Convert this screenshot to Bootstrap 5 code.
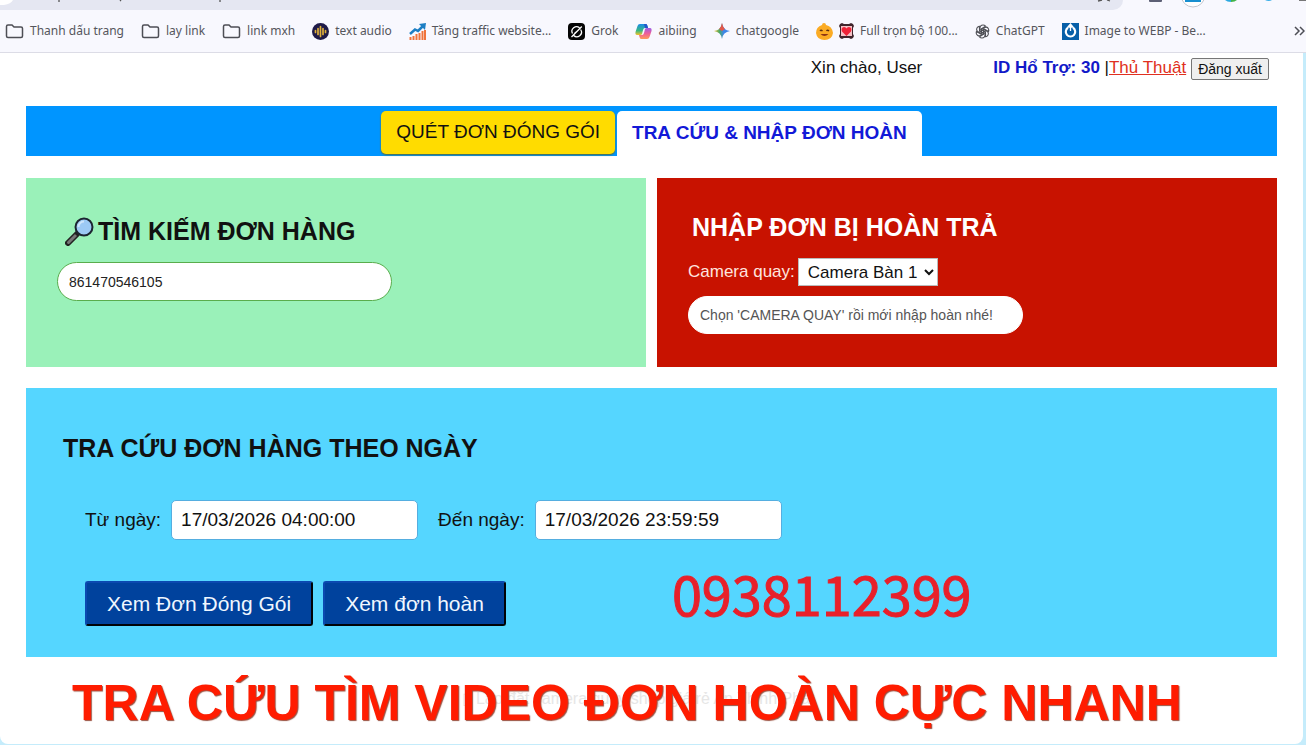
<!DOCTYPE html>
<html lang="vi">
<head>
<meta charset="utf-8">
<meta name="viewport" content="width=device-width, initial-scale=1">
<title>Tra cứu &amp; nhập đơn hoàn</title>
<link href="https://cdn.jsdelivr.net/npm/bootstrap@5.3.0/dist/css/bootstrap.min.css" rel="stylesheet">
<style>
  body { background: #c5ecfb; color: #111; font-family: "Liberation Sans", Arial, sans-serif; font-size: 16px; line-height: 24px; }

  /* browser chrome */
  .chrome { background: #f8f8fe; border-bottom: 1px solid #dcdce6; height: 53px; overflow: hidden; font-family: "Noto Sans", "Open Sans", sans-serif; font-size: 12px; }
  .chrome-top { height: 10px; }
  .omnibox { background: #e5e7f2; border-radius: 0 0 14px 0; width: 86%; height: 10px; overflow: hidden; }
  .chrome-top svg { display: block; flex: none; }
  .bookmarks { height: 42px; gap: 17px; padding: 0 1px 0 5px; white-space: nowrap; }
  .bookmarks a { color: #55565c; text-decoration: none; gap: 6px; display: flex; align-items: center; }
  .bookmarks svg { flex: none; }
  .more { margin-left: auto; color: #55565c; background: none; border: 0; padding: 0; line-height: 0; }

  /* application frame */
  .sheet { background: #fff; border-radius: 0 0 8px 8px; margin-right: 3px; padding: 0 26px 33px; position: relative; }
  .account { height: 53px; padding: 3px 8px 0 0; font-size: 17px; }
  .hello { margin-right: 71px; }
  .support { color: #1219c8; font-weight: 700; }
  .tips { color: #e03020; }
  .btn-logout { font-size: 14px; line-height: 20px; padding: 0 6px; background: #efefef; border: 1px solid #767676; border-radius: 2px; margin-left: 5px; color: #111; margin-top: 2px; }

  .tabs { background: #0095ff; height: 50px; gap: 2px; padding-top: 5px; }
  .tab-btn { border: 0; font-size: 19px; line-height: 24px; padding: 9px 15px 10px; color: #111; white-space: nowrap; }
  .tab-pack { background: #ffdc00; border-radius: 5px; box-shadow: 0 1px 2px #5c6b2f; height: 43px; }
  .tab-return { background: #fff; border-radius: 5px 5px 0 0; color: #1219d8; font-weight: 700; height: 45px; }

  .panels { gap: 11px; margin-top: 22px; }
  .panel { flex: 1 1 0; min-height: 189px; }
  .panel-find { background: #9af1b9; padding: 36px 31px 0; }
  .panel-return { background: #c81200; padding: 32px 31px 0; color: #fff; }
  .panel-date { background: #55d6ff; margin-top: 21px; padding: 43px 37px 31px; }
  h2 { font-size: 25px; line-height: 34px; font-weight: 700; margin: 0; }
  .panel h2 { margin-bottom: 14px; }
  .pill { width: 335px; max-width: 100%; height: 39px; border-radius: 20px; border: 1px solid #59ad4c; padding: 0 11px; font-size: 14px; background: #fff; color: #222; display: block; }
  .panel-return .pill { border-color: #fff; height: 38px; margin-top: 10px; }
  .pill::placeholder { color: #555; opacity: 1; }
  .cam { font-size: 17px; height: 28px; border: 1px solid #bbb; border-radius: 0; background: #fff; color: #111; padding: 0 0 0 5px; width: 140px; }
  .cam-label { font-size: 17px; margin-right: 3px; color: #ffe4df; }

  .dates { margin: 35px 0 0 22px; font-size: 19px; }
  .dates label { margin-right: 10px; }
  .dates input { width: 247px; height: 40px; border: 1px solid #55aee0; border-radius: 5px; padding: 0 9px; font-size: 19px; margin-right: 20px; color: #111; background: #fff; }
  .actions { margin: 41px 0 0 22px; gap: 10px; }
  .btn-view { background: #00429d; color: #f0f7ff; border: 2px outset #06265c; border-radius: 3px; font-size: 21px; line-height: 24px; height: 45px; padding: 0 20px; }
  .phone { font-family: "Noto Sans CJK SC", sans-serif; font-size: 54px; line-height: 24px; color: #e8202a; -webkit-text-stroke: 1px #e8202a; margin-left: 156px; }

  .foot { color: #e6e6e6; font-size: 16px; margin-top: 30px; padding-right: 26px; text-align: center; }
  .headline { position: absolute; left: 72px; bottom: 11px; font-size: 50px; line-height: 60px; font-weight: 700; color: #ff1c00; text-shadow: 1px 1px 1px #9a5040; white-space: nowrap; }
</style>
</head>
<body>
<header class="chrome">
  <div class="chrome-top d-flex justify-content-between">
    <div class="omnibox">
      <svg width="1120" height="10" viewBox="0 0 1120 10" aria-hidden="true"><path d="M0 0h13q-2 4-9 5H0z" fill="#fff"/><path d="M59 0v2M121 0l-1 1M220 0v2M1098 1l4-1M1107 0l3 1" stroke="#555" stroke-width="1.3"/></svg>
    </div>
    <svg width="160" height="10" viewBox="0 0 160 10" aria-hidden="true"><rect x="3" y="-6" width="13" height="8" rx="1" fill="#5d6075"/><circle cx="47" cy="-5" r="12" fill="#fff" stroke="#c4c6ce"/><path d="M39 0h16v2H39z" fill="#188fd0"/><path d="M79 0h6v2q-4 0-6-2z" fill="#2aa8e0"/><path d="M85 0h6q-2 2-6 2z" fill="#42b34a"/><path d="M119 0h7q-3 2-7 0z" fill="#3aaee8"/><path d="M153 0h7v1h-7z" fill="#777"/></svg>
  </div>
  <nav class="bookmarks d-flex align-items-center" aria-label="Dấu trang">
    <a href="#"><svg width="19" height="16" viewBox="0 0 19 16"><path d="M1.5 3.5q0-1.5 1.5-1.5h4l2 2h7q1.500 0 1.500 1.500v7.500q0 1.500-1.500 1.500H3q-1.500 0-1.500-1.500z" fill="none" stroke="#4d4e55" stroke-width="1.500"/></svg>Thanh dấu trang</a>
    <a href="#"><svg width="19" height="16" viewBox="0 0 19 16"><path d="M1.5 3.5q0-1.5 1.5-1.5h4l2 2h7q1.500 0 1.500 1.500v7.500q0 1.500-1.500 1.500H3q-1.500 0-1.500-1.500z" fill="none" stroke="#4d4e55" stroke-width="1.500"/></svg>lay link</a>
    <a href="#"><svg width="19" height="16" viewBox="0 0 19 16"><path d="M1.5 3.5q0-1.5 1.5-1.5h4l2 2h7q1.500 0 1.500 1.500v7.500q0 1.500-1.500 1.500H3q-1.500 0-1.500-1.500z" fill="none" stroke="#4d4e55" stroke-width="1.500"/></svg>link mxh</a>
    <a href="#"><svg width="17" height="17" viewBox="0 0 17 17"><circle cx="8.500" cy="8.500" r="8.500" fill="#1e1a48"/><path d="M3.500 7.500v2M6 5.500v6M8.500 3.500v10M11 5.500v6M13.500 7.500v2" stroke="#e0b03c" stroke-width="1.700" stroke-linecap="round"/></svg>text audio</a>
    <a href="#"><svg width="17" height="17" viewBox="0 0 17 17"><path d="M1.500 17v-3M4.500 17v-4M7.500 17v-6M10.500 17v-7M13.500 17v-9M16 17V7" stroke="#f0743c" stroke-width="2"/><path d="M1 11l5-4.500 3 1.500 5-5" fill="none" stroke="#1d7fc4" stroke-width="2.500"/><path d="M10 1l7-1-1 7z" fill="#1d7fc4"/></svg>Tăng traffic website...</a>
    <a href="#"><svg width="17" height="17" viewBox="0 0 17 17"><rect width="17" height="17" rx="4" fill="#050505"/><path d="M11.500 4.800A4.600 4.600 0 0 0 4.500 10.500M5.500 12.300A4.600 4.600 0 0 0 12.600 6.500M3.500 14L13.800 3.500M6.500 10.500l4-3.500" fill="none" stroke="#fff" stroke-width="1.300"/></svg>Grok</a>
    <a href="#"><svg width="17" height="17" viewBox="0 0 17 17"><defs><linearGradient id="ca" x2="0" y2="1"><stop stop-color="#1a8be8"/><stop offset=".6" stop-color="#38b880"/><stop offset="1" stop-color="#f5c02c"/></linearGradient><linearGradient id="cb" x2="0" y2="1"><stop stop-color="#9a5de8"/><stop offset=".5" stop-color="#ee5e9a"/><stop offset="1" stop-color="#ff9a58"/></linearGradient></defs><path d="M5 1h6q1 0 1.500 2L13 5h-3q-1.500 0-2 2l-1 4q-.5 1-2 1H2q-2 0-1.500-3l2-6Q3 1 5 1z" fill="url(#ca)"/><path d="M12 16H6q-1 0-1.500-2L4 12h3q1.500 0 2-2l1-4q.5-1 2-1h3q2 0 1.500 3l-2 6Q14 16 12 16z" fill="url(#cb)"/><path d="M11 1q1 0 1.500 2l.5 2h-3L9 1z" fill="#2356c8"/></svg>aibiing</a>
    <a href="#"><svg width="16" height="16" viewBox="0 0 16 16"><defs><linearGradient id="gm"><stop stop-color="#f2bd28"/><stop offset=".35" stop-color="#4aa86a"/><stop offset=".6" stop-color="#3f86e8"/><stop offset="1" stop-color="#3f86e8"/></linearGradient></defs><path d="M8 0q1 7 8 8-7 1-8 8-1-7-8-8 7-1 8-8z" fill="url(#gm)"/><path d="M8 0q.6 4 3 6L8 8 5 6q2.400-2 3-6z" fill="#e4574a"/></svg>chatgoogle</a>
    <a href="#"><svg width="17" height="17" viewBox="0 0 17 17"><path d="M8 0q2 0 2 2 6 1 7 8-1 7-8.500 7T0 10q0-6 6-8 0-2 2-2z" fill="#fbab24"/><path d="M4.500 11q4 4 8 0" fill="#8c3313"/><path d="M4 8q1-1.500 2.500 0M10.500 8q1-1.500 2.500 0" stroke="#5c2c10" fill="none" stroke-width="1.300"/></svg><svg width="15" height="16" viewBox="0 0 15 16"><path d="M0 3l1-2 2-1 2 1h5l2-1 2 1 1 2-1 2v6l1 2-1 2-2 1-2-1H5l-2 1-2-1-1-2 1-2V5z" fill="#40252c"/><path d="M2 3h11v10H2z" fill="#f6c1c6"/><path d="M7.500 13L3 8.500Q1.500 4.500 5 4q2 0 2.500 1.500Q8 4 10 4q3.500.5 2 4.500z" fill="#ef2338"/></svg><span>Full trọn bộ 100...</span></a>
    <a href="#"><svg width="15" height="15" viewBox="0 0 15 15"><g fill="none" stroke="#505157" stroke-width="1.100"><path id="k" d="M5 8.500V4.200Q5 1 8 1q1.600 0 2.500 1.200L6.500 4.700v4.800"/><use href="#k" transform="rotate(60 7.500 7.500)"/><use href="#k" transform="rotate(120 7.500 7.500)"/><use href="#k" transform="rotate(180 7.500 7.500)"/><use href="#k" transform="rotate(240 7.500 7.500)"/><use href="#k" transform="rotate(300 7.500 7.500)"/></g></svg>ChatGPT</a>
    <a href="#"><svg width="17" height="17" viewBox="0 0 17 17"><path d="M0 0h17v17H0z" fill="#075fa8"/><path d="M6 4.800a4.700 4.700 0 1 0 5 0" fill="none" stroke="#fff" stroke-width="2.200"/><path d="M8.500 2v6M6 4l2.500-3L11 4z" stroke="#fff" stroke-width="1.300" fill="#fff"/></svg>Image to WEBP - Be...</a>
    <button class="more" type="button" aria-label="Thêm dấu trang"><svg width="12" height="12" viewBox="0 0 12 12"><path d="M2 2l4 4-4 4M7 2l4 4-4 4" fill="none" stroke="#4d4e55" stroke-width="1.500"/></svg></button>
  </nav>
</header>

<main class="sheet">
  <div class="account d-flex justify-content-end align-items-start">
    <span class="hello">Xin chào, User</span>
    <span class="support">ID Hổ Trợ: 30</span><span>&nbsp;|</span><a class="tips" href="#">Thủ Thuật</a>
    <button class="btn-logout" type="button">Đăng xuất</button>
  </div>

  <nav class="tabs d-flex justify-content-center align-items-start">
    <button class="tab-btn tab-pack" type="button">QUÉT ĐƠN ĐÓNG GÓI</button>
    <button class="tab-btn tab-return" type="button">TRA CỨU &amp; NHẬP ĐƠN HOÀN</button>
  </nav>

  <div class="panels d-flex">
    <section class="panel panel-find">
      <h2 class="d-flex align-items-center ps-2"><svg class="me-1" width="29" height="29" viewBox="0 0 29 29" aria-hidden="true"><path d="M3 26l9-9" stroke="#222" stroke-width="6" stroke-linecap="round"/><path d="M3.500 25.500l7-7" stroke="#777" stroke-width="3" stroke-linecap="round"/><path d="M11 18l3-3" stroke="#222" stroke-width="3"/><circle cx="19" cy="10" r="8.500" fill="#9cc9f5" stroke="#1c2530" stroke-width="2"/><path d="M13.500 10a5.500 5.500 0 0 1 5.500-5.500" stroke="#cfe5fb" stroke-width="2" fill="none"/></svg><label for="order">TÌM KIẾM ĐƠN HÀNG</label></h2>
      <input id="order" class="pill" type="text" value="861470546105">
    </section>
    <section class="panel panel-return">
      <h2><label class="ps-1" for="return">NHẬP ĐƠN BỊ HOÀN TRẢ</label></h2>
      <div class="d-flex align-items-center">
        <label class="cam-label" for="cam">Camera quay:</label>
        <select id="cam" class="cam"><option>Camera Bàn 1</option></select>
      </div>
      <input id="return" class="pill" type="text" placeholder="Chọn 'CAMERA QUAY' rồi mới nhập hoàn nhé!">
    </section>
  </div>

  <section class="panel-date">
    <h2>TRA CỨU ĐƠN HÀNG THEO NGÀY</h2>
    <div class="dates d-flex align-items-center">
      <label for="from">Từ ngày:</label><input id="from" type="text" value="17/03/2026 04:00:00">
      <label for="to">Đến ngày:</label><input id="to" type="text" value="17/03/2026 23:59:59">
    </div>
    <div class="actions d-flex align-items-start">
      <button class="btn-view" type="button">Xem Đơn Đóng Gói</button>
      <button class="btn-view" type="button">Xem đơn hoàn</button>
      <span class="phone">0938112399</span>
    </div>
  </section>

  <footer class="foot">▯ Lắp đặt camera quay shop giá rẻ An Thịnh Phát</footer>
  <div class="headline">TRA CỨU TÌM VIDEO ĐƠN HOÀN CỰC NHANH</div>
</main>
<script src="https://cdn.jsdelivr.net/npm/bootstrap@5.3.0/dist/js/bootstrap.bundle.min.js"></script>
</body>
</html>
